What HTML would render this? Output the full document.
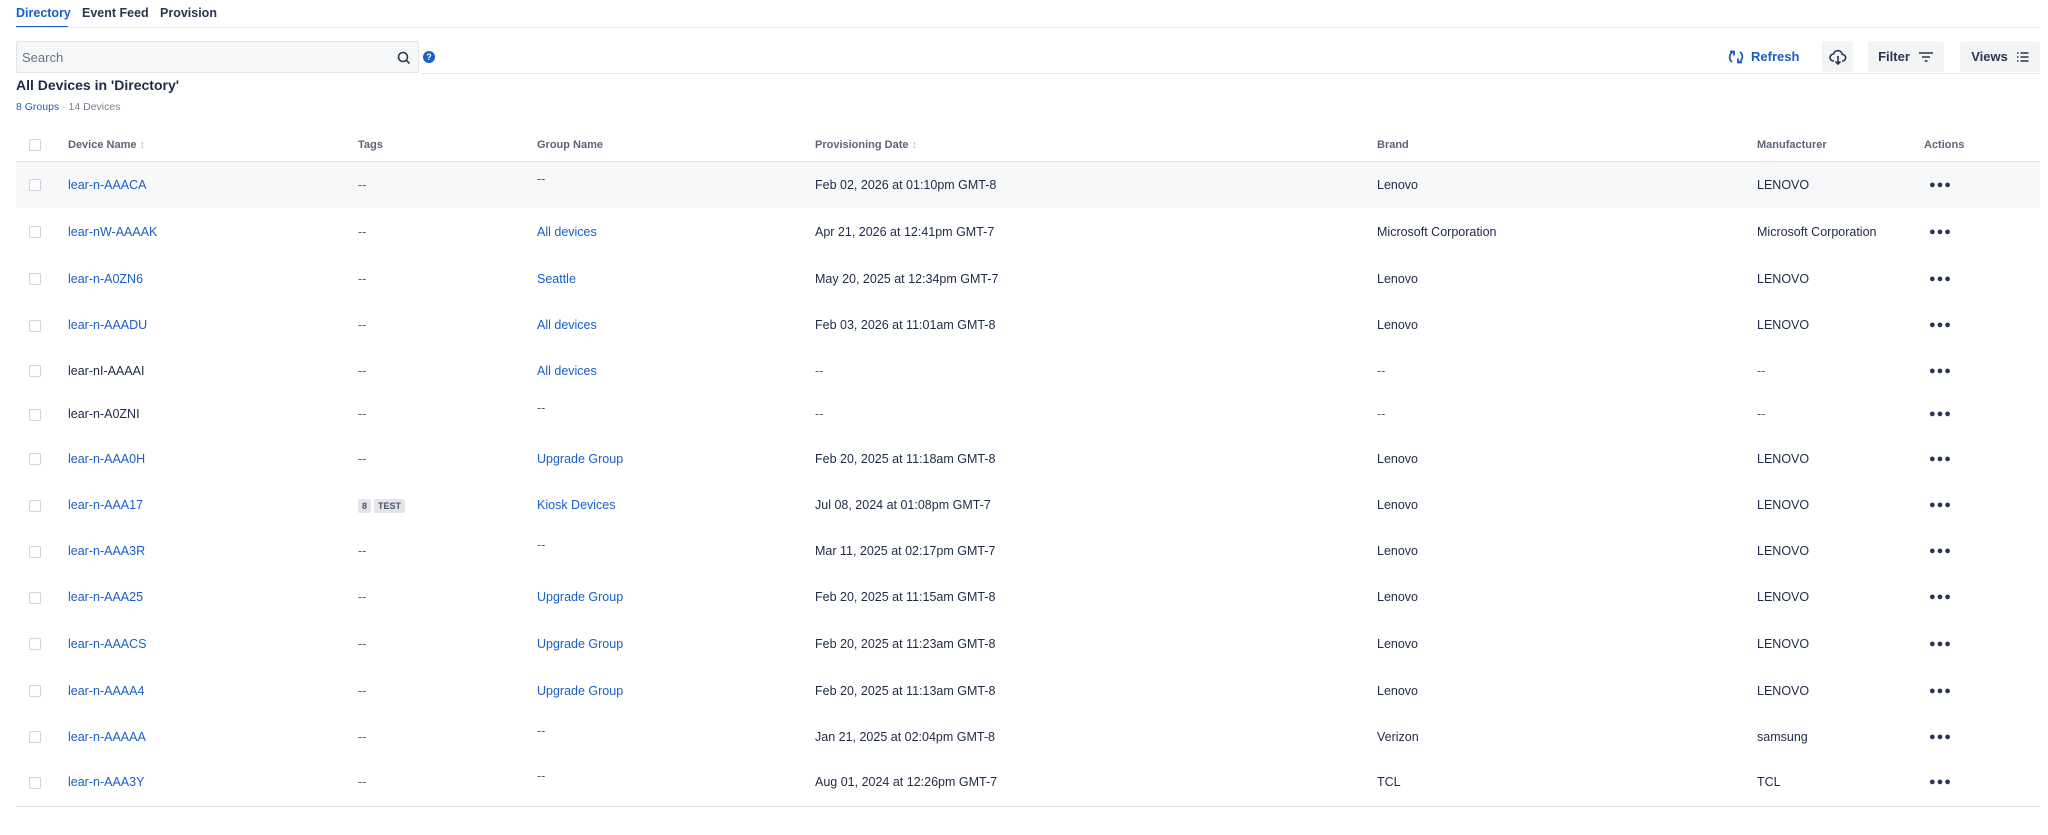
<!DOCTYPE html>
<html><head><meta charset="utf-8"><style>
*{box-sizing:border-box;margin:0;padding:0}
body{width:2048px;height:835px;background:#fff;font-family:"Liberation Sans",sans-serif;color:#1f2a44;position:relative;overflow:hidden}
.abs{position:absolute}
.tab{position:absolute;top:6px;font-size:12.5px;font-weight:bold;color:#2a3550}
a{color:#1a5fc7;text-decoration:none}
.btn{position:absolute;top:41px;height:31px;background:#f3f4f6;border-radius:3px;font-size:13px;font-weight:bold;color:#2a3550;display:flex;align-items:center;justify-content:center;gap:8px}
table{position:absolute;left:16px;top:129px;width:2024px;border-collapse:collapse;font-size:12.5px}
th{text-align:left;font-size:11px;font-weight:bold;color:#5b6478;height:32px;border-bottom:1.5px solid #e2e4e9;padding:0}
td{padding:0;vertical-align:middle}
.cb{display:inline-block;width:12px;height:12px;border:1px solid #cfd3da;border-radius:2px;background:#fff;margin-left:13px;vertical-align:middle}
.g{color:#555e70}
.chip{display:inline-block;background:#e3e5ea;color:#4a5366;font-size:9px;font-weight:bold;padding:2px 4px;border-radius:2px;margin-right:3px}
.dots{font-size:11px;font-weight:bold;letter-spacing:1px;color:#2a3550;padding-left:5px}
.up{position:relative;top:-6px}
</style></head><body>
<div class="tab" style="left:16px;color:#1a5fc7">Directory</div>
<div class="abs" style="left:16px;top:26px;width:52px;height:2px;background:#1a5fc7"></div>
<div class="tab" style="left:82px">Event Feed</div>
<div class="tab" style="left:160px">Provision</div>
<div class="abs" style="left:16px;top:27px;width:2024px;height:1px;background:#e6e8ec"></div>

<div class="abs" style="left:16px;top:41px;width:403px;height:32px;background:#f6f7f9;border:1px solid #e2e4e9;border-radius:2px;font-size:13px;color:#6b7385;padding:8px 5px">Search</div>
<svg class="abs" style="left:397px;top:51px" width="14" height="14" viewBox="0 0 14 14"><circle cx="6" cy="6" r="4.5" fill="none" stroke="#2a3550" stroke-width="1.6"/><path d="M9.3 9.3L12.5 12.5" stroke="#2a3550" stroke-width="1.6"/></svg>
<div class="abs" style="left:423px;top:51px;width:12px;height:12px;border-radius:50%;background:#1a5fc7;color:#fff;font-size:9px;font-weight:bold;text-align:center;line-height:12px">?</div>
<div class="abs" style="left:420px;top:73px;width:1620px;height:1px;background:#e6e8ec"></div>

<svg class="abs" style="left:1728px;top:49px" width="16" height="16" viewBox="0 0 16 16" fill="none" stroke="#1a5fc7" stroke-width="1.8"><path d="M6 2.5A6 6 0 0 0 4 13"/><path d="M10 13.5A6 6 0 0 0 12 3"/><path d="M2 2.5h4v4M14 13.5h-4v-4"/></svg>
<div class="abs" style="left:1751px;top:49px;font-size:13px;font-weight:bold;color:#1a5fc7">Refresh</div>
<div class="btn" style="left:1822px;width:31px"><svg width="18" height="16" viewBox="0 0 18 16" fill="none" stroke="#2a3550" stroke-width="1.6"><path d="M5 12H4.5A3.5 3.5 0 0 1 4.5 5 4.5 4.5 0 0 1 13.3 5.5 3 3 0 0 1 13.5 12H13"/><path d="M9 7v8M6.5 12.5L9 15l2.5-2.5"/></svg></div>
<div class="btn" style="left:1868px;width:76px">Filter <svg width="16" height="12" viewBox="0 0 16 12" stroke="#2a3550" stroke-width="1.6"><path d="M1 2h14M4 6h8M6.5 10h3"/></svg></div>
<div class="btn" style="left:1960px;width:80px">Views <svg width="13" height="12" viewBox="0 0 13 12" stroke="#2a3550" stroke-width="1.6"><path d="M1 2h1.5M1 6h1.5M1 10h1.5M4.5 2h8M4.5 6h8M4.5 10h8"/></svg></div>

<div class="abs" style="left:16px;top:77px;font-size:14px;font-weight:bold;color:#1f2a44">All Devices in 'Directory'</div>
<div class="abs" style="left:16px;top:101px;font-size:10.5px;color:#7a8294"><a>8 Groups</a> · 14 Devices</div>

<table>
<colgroup><col style="width:52px"><col style="width:290px"><col style="width:179px"><col style="width:278px"><col style="width:562px"><col style="width:380px"><col style="width:167px"><col></colgroup>
<tr><th><span class="cb"></span></th><th>Device Name <span style="color:#bbb">↕</span></th><th>Tags</th><th>Group Name</th><th>Provisioning Date <span style="color:#bbb">↕</span></th><th>Brand</th><th>Manufacturer</th><th>Actions</th></tr>
<tr style="height:47px;background:#f7f8fa"><td><span class="cb"></span></td><td><a>lear-n-AAACA</a></td><td class="g">--</td><td class="g"><span class="up">--</span></td><td>Feb 02, 2026 at 01:10pm GMT-8</td><td>Lenovo</td><td>LENOVO</td><td class="dots">●●●</td></tr>
<tr style="height:47px"><td><span class="cb"></span></td><td><a>lear-nW-AAAAK</a></td><td class="g">--</td><td><a>All devices</a></td><td>Apr 21, 2026 at 12:41pm GMT-7</td><td>Microsoft Corporation</td><td>Microsoft Corporation</td><td class="dots">●●●</td></tr>
<tr style="height:47px"><td><span class="cb"></span></td><td><a>lear-n-A0ZN6</a></td><td class="g">--</td><td><a>Seattle</a></td><td>May 20, 2025 at 12:34pm GMT-7</td><td>Lenovo</td><td>LENOVO</td><td class="dots">●●●</td></tr>
<tr style="height:46px"><td><span class="cb"></span></td><td><a>lear-n-AAADU</a></td><td class="g">--</td><td><a>All devices</a></td><td>Feb 03, 2026 at 11:01am GMT-8</td><td>Lenovo</td><td>LENOVO</td><td class="dots">●●●</td></tr>
<tr style="height:45px"><td><span class="cb"></span></td><td>lear-nI-AAAAI</td><td class="g">--</td><td><a>All devices</a></td><td class="g">--</td><td class="g">--</td><td class="g">--</td><td class="dots">●●●</td></tr>
<tr style="height:42px"><td><span class="cb"></span></td><td>lear-n-A0ZNI</td><td class="g">--</td><td class="g"><span class="up">--</span></td><td class="g">--</td><td class="g">--</td><td class="g">--</td><td class="dots">●●●</td></tr>
<tr style="height:47px"><td><span class="cb"></span></td><td><a>lear-n-AAA0H</a></td><td class="g">--</td><td><a>Upgrade Group</a></td><td>Feb 20, 2025 at 11:18am GMT-8</td><td>Lenovo</td><td>LENOVO</td><td class="dots">●●●</td></tr>
<tr style="height:46px"><td><span class="cb"></span></td><td><a>lear-n-AAA17</a></td><td><span class="chip">8</span><span class="chip">TEST</span></td><td><a>Kiosk Devices</a></td><td>Jul 08, 2024 at 01:08pm GMT-7</td><td>Lenovo</td><td>LENOVO</td><td class="dots">●●●</td></tr>
<tr style="height:46px"><td><span class="cb"></span></td><td><a>lear-n-AAA3R</a></td><td class="g">--</td><td class="g"><span class="up">--</span></td><td>Mar 11, 2025 at 02:17pm GMT-7</td><td>Lenovo</td><td>LENOVO</td><td class="dots">●●●</td></tr>
<tr style="height:46px"><td><span class="cb"></span></td><td><a>lear-n-AAA25</a></td><td class="g">--</td><td><a>Upgrade Group</a></td><td>Feb 20, 2025 at 11:15am GMT-8</td><td>Lenovo</td><td>LENOVO</td><td class="dots">●●●</td></tr>
<tr style="height:47px"><td><span class="cb"></span></td><td><a>lear-n-AAACS</a></td><td class="g">--</td><td><a>Upgrade Group</a></td><td>Feb 20, 2025 at 11:23am GMT-8</td><td>Lenovo</td><td>LENOVO</td><td class="dots">●●●</td></tr>
<tr style="height:47px"><td><span class="cb"></span></td><td><a>lear-n-AAAA4</a></td><td class="g">--</td><td><a>Upgrade Group</a></td><td>Feb 20, 2025 at 11:13am GMT-8</td><td>Lenovo</td><td>LENOVO</td><td class="dots">●●●</td></tr>
<tr style="height:45px"><td><span class="cb"></span></td><td><a>lear-n-AAAAA</a></td><td class="g">--</td><td class="g"><span class="up">--</span></td><td>Jan 21, 2025 at 02:04pm GMT-8</td><td>Verizon</td><td>samsung</td><td class="dots">●●●</td></tr>
<tr style="height:47px;border-bottom:1.5px solid #e2e4e9"><td><span class="cb"></span></td><td><a>lear-n-AAA3Y</a></td><td class="g">--</td><td class="g"><span class="up">--</span></td><td>Aug 01, 2024 at 12:26pm GMT-7</td><td>TCL</td><td>TCL</td><td class="dots">●●●</td></tr>
</table>
</body></html>
